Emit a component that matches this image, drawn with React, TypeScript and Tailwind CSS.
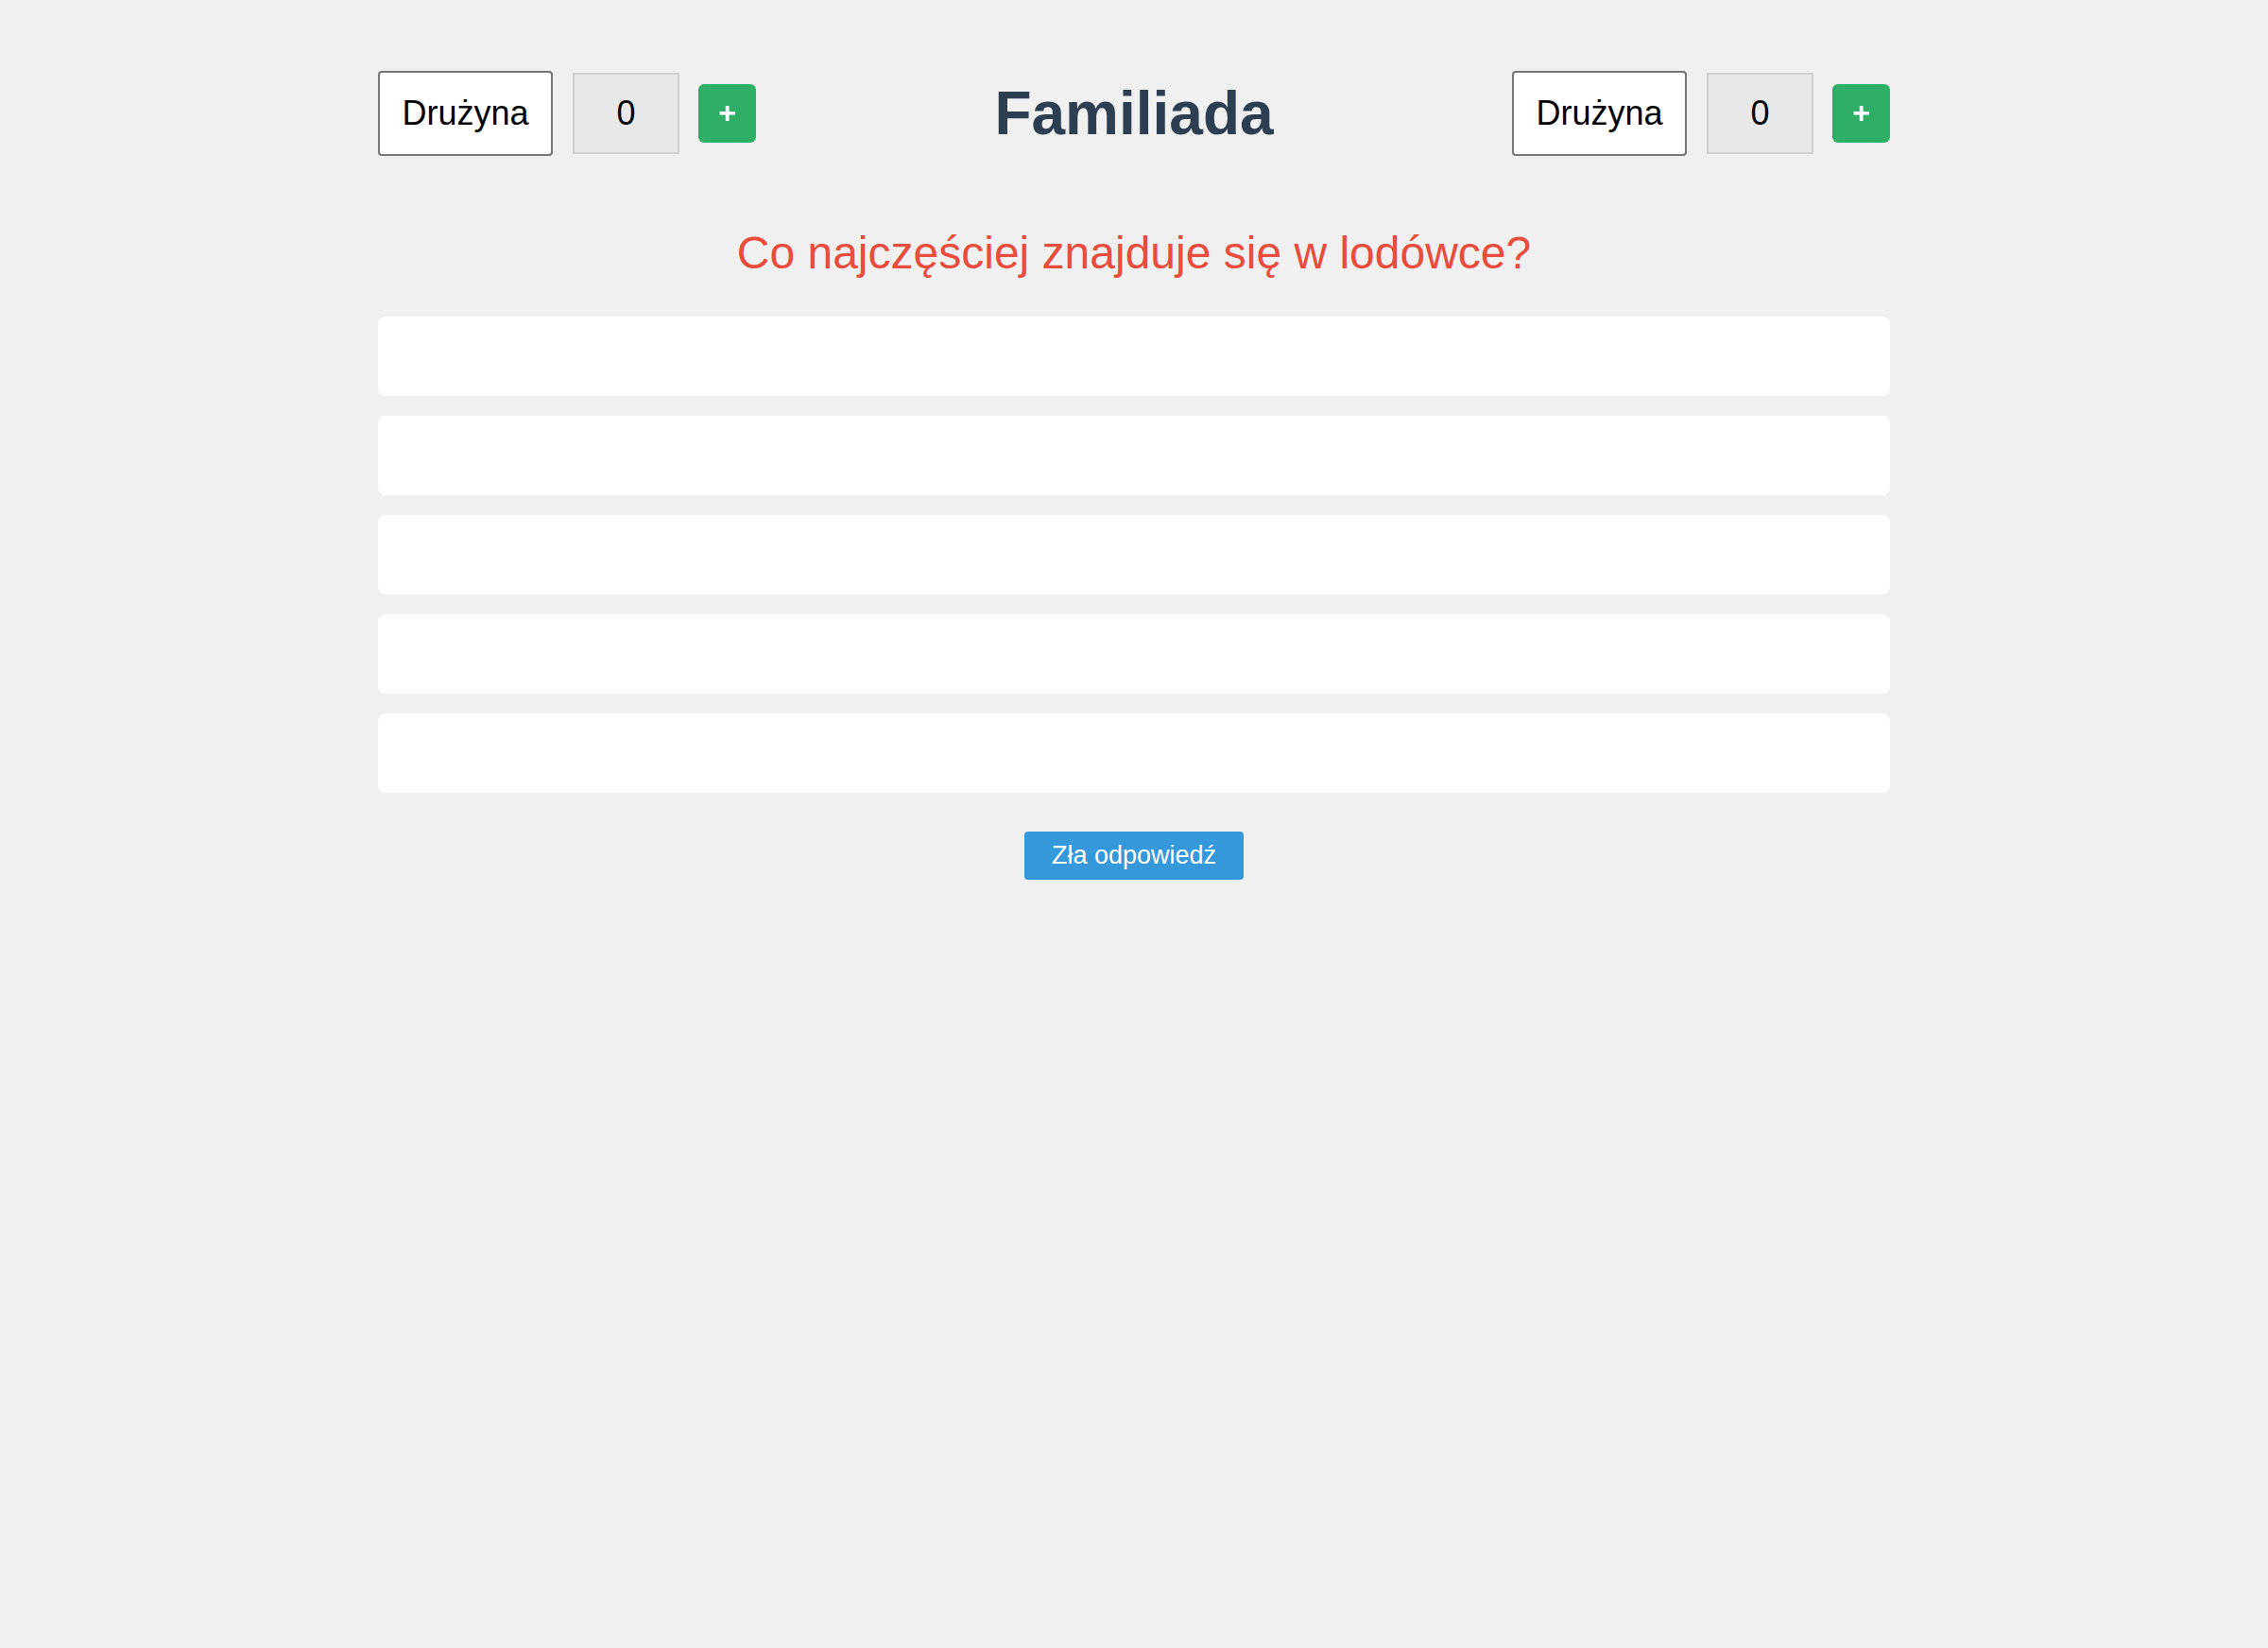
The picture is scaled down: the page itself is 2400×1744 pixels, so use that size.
import { useState } from 'react';

const ROWS = [0, 1, 2, 3, 4];

function TeamPanel({ name, score, onAdd }: { name: string; score: number; onAdd: () => void }) {
  const [team, setTeam] = useState(name);
  return (
    <div className="flex items-center">
      <input
        value={team}
        onChange={(event) => {
          setTeam(event.currentTarget.value);
        }}
        className="h-[90px] w-[185px] rounded-[4px] border-2 border-[#767676] bg-white text-center text-[36px] text-black outline-none"
      />
      <div className="ml-[21px] flex h-[86px] w-[113px] items-center justify-center border-2 border-[#cfcfcf] bg-[#e8e8e8] text-[36px] text-black">
        {score}
      </div>
      <button
        onClick={onAdd}
        className="ml-[20px] flex h-[62px] w-[61px] items-center justify-center rounded-[6px] bg-[#2eae67] pb-[2px] text-[32px] font-bold leading-none text-white"
      >
        +
      </button>
    </div>
  );
}

export default function App() {
  const [scores, setScores] = useState([0, 0]);
  const add = (index: number) => {
    setScores((previous) => previous.map((value, i) => (i === index ? value + 1 : value)));
  };

  return (
    <div className="min-h-[1744px] bg-[#f0f0f0] font-['Liberation_Sans',Arial,sans-serif]">
      <div className="mx-auto w-[1600px] pt-[75px]">
        <header className="flex h-[90px] items-center justify-between">
          <TeamPanel name="Drużyna" score={scores[0]} onAdd={() => { add(0); }} />
          <h1 className="text-[64px] font-bold leading-none text-[#2c3e50]">Familiada</h1>
          <TeamPanel name="Drużyna" score={scores[1]} onAdd={() => { add(1); }} />
        </header>

        <h2 className="mt-[75px] text-center text-[48px] leading-[56px] text-[#e74c3c]">
          Co najczęściej znajduje się w lodówce?
        </h2>

        <div className="mt-[39px] flex flex-col gap-[21px]">
          {ROWS.map((row) => (
            <div key={row} className="h-[84px] rounded-[8px] bg-white" />
          ))}
        </div>

        <div className="mt-[41px] flex justify-center">
          <button className="h-[51px] w-[232px] rounded-[4px] bg-[#3498db] text-[27px] text-white">
            Zła odpowiedź
          </button>
        </div>
      </div>
    </div>
  );
}
